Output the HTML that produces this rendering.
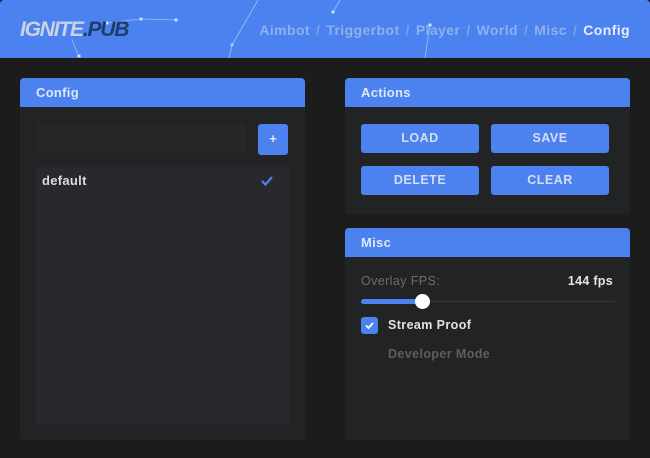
<!DOCTYPE html>
<html><head><style>
*{margin:0;padding:0;box-sizing:border-box}
body{width:650px;height:458px;background:#1b1c1b;font-family:"Liberation Sans",sans-serif;position:relative;overflow:hidden;font-weight:bold}
.hdr{position:absolute;left:0;top:0;width:650px;height:58px;background:#4b82ef;border-radius:4px 4px 0 0;overflow:hidden}
.logo{position:absolute;left:20px;top:18px;font-size:21px;font-style:italic;letter-spacing:-1.2px;color:#c9d3e6}
.logo span{color:#1f3d6e}
.nav{position:absolute;right:20px;top:22px;font-size:14px;color:#8fb0ee;letter-spacing:0.4px}
.nav b{color:#e8eefb}
.nav i{font-style:normal;margin:0 6px;color:#7da2eb}
.p{position:absolute;background:#222325;border-radius:4px;overflow:hidden}
.ph{height:29px;background:#4b82ef;color:#dfe7f8;font-size:13px;padding:7px 0 0 16px;letter-spacing:0.3px}
.a{position:absolute}
.btn{position:absolute;background:#4b82ef;border-radius:3px;color:#d5def2;font-size:12.5px;text-align:center;line-height:29px;width:118px;height:29px;letter-spacing:0.5px}
</style></head><body>
<div class="hdr">
<svg width="650" height="58" style="position:absolute;left:0;top:0" stroke="#9fbff5" stroke-width="0.8" fill="#d8e5fb">
<line x1="107" y1="23" x2="141" y2="19"/><line x1="141" y1="19" x2="176" y2="20"/>
<line x1="72" y1="40" x2="79" y2="57"/><line x1="258" y1="0" x2="232" y2="45"/><line x1="232" y1="45" x2="229" y2="58"/>
<line x1="340" y1="0" x2="333" y2="12"/><line x1="430" y1="25" x2="425" y2="58"/>
<circle cx="107" cy="23" r="1.5"/><circle cx="141" cy="19" r="1.5"/><circle cx="176" cy="20" r="1.5"/><circle cx="79" cy="56" r="1.5"/><circle cx="333" cy="12" r="1.5"/><circle cx="430" cy="25" r="1.5"/><circle cx="232" cy="45" r="1.2"/>
</svg>
<div class="logo">IGNITE<span>.PUB</span></div>
<div class="nav">Aimbot<i>/</i>Triggerbot<i>/</i>Player<i>/</i>World<i>/</i>Misc<i>/</i><b>Config</b></div>
</div>

<div class="p" style="left:20px;top:78px;width:285px;height:362px">
<div class="ph">Config</div>
<div class="a" style="left:16px;top:46px;width:210px;height:28px;background:#262729;border-radius:3px"></div>
<div class="a" style="left:238px;top:46px;width:30px;height:31px;background:#4b82ef;border-radius:3px;color:#e0e8fa;font-size:13px;text-align:center;line-height:30px">+</div>
<div class="a" style="left:16px;top:89px;width:253px;height:257px;background:#28292c;border-radius:3px">
<div style="position:absolute;left:6px;top:6px;color:#dcdcdc;font-size:13px;letter-spacing:0.3px">default</div>
<svg style="position:absolute;left:224px;top:8px" width="14" height="12"><path d="M2 6 L5.5 9.5 L12 2" stroke="#4b82ef" stroke-width="2.2" fill="none"/></svg>
</div>
</div>

<div class="p" style="left:345px;top:78px;width:285px;height:136px">
<div class="ph">Actions</div>
<div class="btn" style="left:16px;top:46px">LOAD</div>
<div class="btn" style="left:146px;top:46px">SAVE</div>
<div class="btn" style="left:16px;top:88px">DELETE</div>
<div class="btn" style="left:146px;top:88px">CLEAR</div>
</div>

<div class="p" style="left:345px;top:228px;width:285px;height:212px">
<div class="ph">Misc</div>
<div class="a" style="left:16px;top:46px;color:#6b6c6f;font-size:12.5px;font-weight:normal;letter-spacing:0.4px">Overlay FPS:</div>
<div class="a" style="right:17px;top:46px;color:#e6e6e6;font-size:12.5px;letter-spacing:0.3px">144 fps</div>
<div class="a" style="left:16px;top:73px;width:254px;height:1px;background:#35363a"></div>
<div class="a" style="left:16px;top:71px;width:62px;height:5px;background:#4b82ef;border-radius:3px"></div>
<div class="a" style="left:70px;top:66px;width:15px;height:15px;background:#fff;border-radius:50%"></div>
<div class="a" style="left:16px;top:89px;width:17px;height:17px;background:#4b82ef;border-radius:3px">
<svg width="17" height="17"><path d="M5 8.5 L7.5 11 L12 6" stroke="#fff" stroke-width="1.8" fill="none"/></svg></div>
<div class="a" style="left:43px;top:90px;color:#e2e2e2;font-size:12.5px;letter-spacing:0.4px">Stream Proof</div>
<div class="a" style="left:16px;top:118px;width:17px;height:17px;background:#242527;border-radius:3px"></div>
<div class="a" style="left:43px;top:119px;color:#5d5e61;font-size:12.5px;letter-spacing:0.4px">Developer Mode</div>
</div>
</body></html>
